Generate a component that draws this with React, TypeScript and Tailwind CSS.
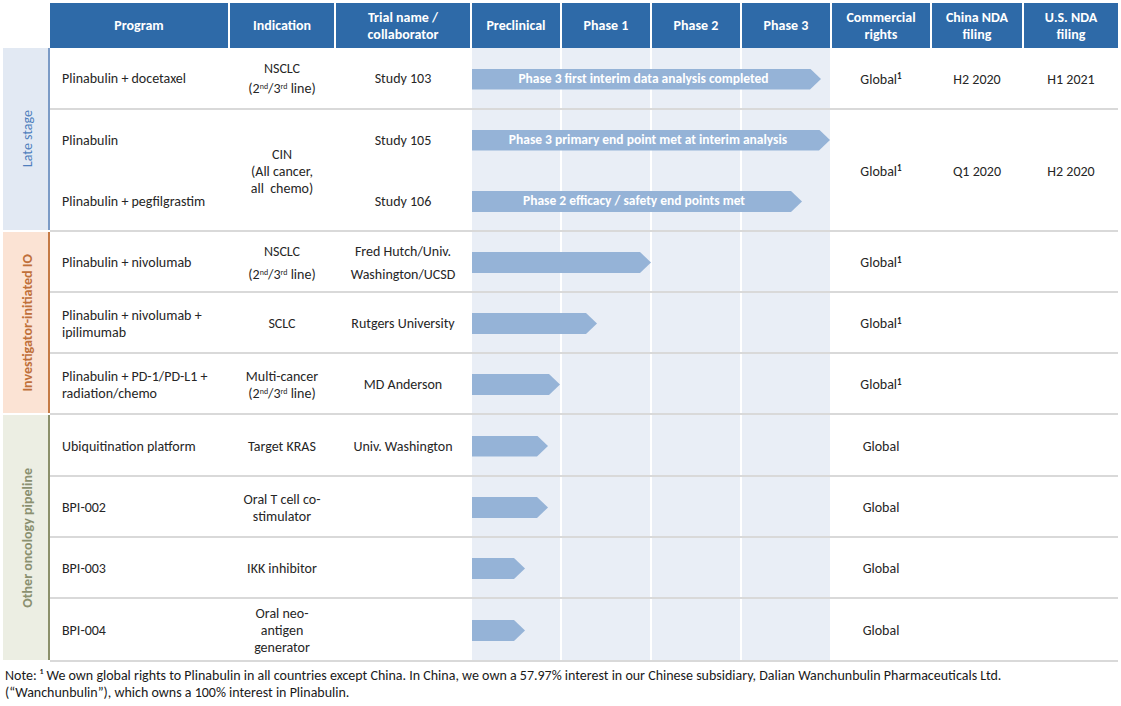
import React from "react";

const GRID =
  "grid grid-cols-[178px_104px_134px_88px_88px_88px_88px_98px_90px_94px] gap-x-[2px]";

function Sup({ children }: { children: React.ReactNode }) {
  return <sup className="text-[9px] font-bold">{children}</sup>;
}

function Line2nd() {
  return (
    <>
      (2<sup className="text-[8px]">nd</sup>/3<sup className="text-[8px]">rd</sup> line)
    </>
  );
}

function Arrow({ end, label, row = 1 }: { end: number; label?: string; row?: number }) {
  const rowCls = row === 1 ? "row-start-1" : "row-start-2";
  return (
    <div className={`col-start-4 col-span-4 ${rowCls} z-10 flex items-center`}>
      <div
        style={{ width: end - 472 }}
        className="h-[21px] bg-[#95b3d7] [clip-path:polygon(0_0,calc(100%_-_11px)_0,100%_50%,calc(100%_-_11px)_100%,0_100%)] flex items-center justify-center pr-[6px] text-white font-bold text-[13.5px] whitespace-nowrap"
      >
        {label}
      </div>
    </div>
  );
}

function PhaseBg({ span2 = false }: { span2?: boolean }) {
  const r = span2 ? "row-start-1 row-span-2" : "row-start-1";
  return (
    <>
      <div className={`col-start-4 ${r} bg-[#e9eef6]`} />
      <div className={`col-start-5 ${r} bg-[#e9eef6]`} />
      <div className={`col-start-6 ${r} bg-[#e9eef6]`} />
      <div className={`col-start-7 ${r} bg-[#e9eef6]`} />
    </>
  );
}

type RowProps = {
  h: string;
  program: React.ReactNode;
  indication?: React.ReactNode;
  trial?: React.ReactNode;
  end: number;
  label?: string;
  commercial?: React.ReactNode;
  china?: string;
  us?: string;
  leading?: string;
};

function Row({ h, program, indication, trial, end, label, commercial, china, us, leading = "leading-[17px]" }: RowProps) {
  return (
    <div className={`${GRID} ${h} border-b-2 border-[#d9d9d9] grid-rows-1`}>
      <div className={`col-start-1 row-start-1 flex items-center pl-[12px] pt-[2px] ${leading}`}>{program}</div>
      <div className={`col-start-2 row-start-1 flex items-center justify-center text-center pt-[2px] ${leading}`}>
        <div>{indication}</div>
      </div>
      <div className={`col-start-3 row-start-1 flex items-center justify-center text-center pt-[2px] ${leading}`}>
        <div>{trial}</div>
      </div>
      <PhaseBg />
      <div className="col-start-4 col-span-4 row-start-1 z-10 flex pt-[2px]">
        <div className="flex-1 flex items-center">
          <div
            style={{ width: end - 472 }}
            className="h-[21px] bg-[#95b3d7] [clip-path:polygon(0_0,calc(100%_-_11px)_0,100%_50%,calc(100%_-_11px)_100%,0_100%)] flex items-center justify-center pr-[6px] text-white font-bold text-[13.5px] whitespace-nowrap"
          >
            {label}
          </div>
        </div>
      </div>
      <div className="col-start-8 row-start-1 flex items-center justify-center pt-[2px]">{commercial}</div>
      <div className="col-start-9 row-start-1 flex items-center justify-center pt-[2px]">{china}</div>
      <div className="col-start-10 row-start-1 flex items-center justify-center pt-[2px]">{us}</div>
    </div>
  );
}

function Sidebar({
  children,
  bg,
  line,
  text,
}: {
  children: React.ReactNode;
  bg: string;
  line: string;
  text: string;
}) {
  return (
    <div className={`w-[47px] shrink-0 mb-[2px] flex ${bg}`}>
      <div className="flex-1 flex items-center justify-center pl-[3px]">
        <span className={`[writing-mode:vertical-rl] rotate-180 whitespace-nowrap text-[14px] ${text}`}>
          {children}
        </span>
      </div>
      <div className={`w-[2px] ${line}`} />
    </div>
  );
}

const headers = [
  "Program",
  "Indication",
  "Trial name /\ncollaborator",
  "Preclinical",
  "Phase 1",
  "Phase 2",
  "Phase 3",
  "Commercial\nrights",
  "China NDA\nfiling",
  "U.S. NDA\nfiling",
];

const G1 = (
  <span>
    Global<Sup>1</Sup>
  </span>
);

export default function App() {
  return (
    <div className="w-[1121px] h-[706px] bg-white pt-[3px] pl-[3px] text-[14px] text-[#262626] [font-family:Carlito,Lato,sans-serif] overflow-hidden">
      {/* header */}
      <div className="flex">
        <div className="w-[47px] shrink-0" />
        <div className={`${GRID} h-[45px]`}>
          {headers.map((t) => (
            <div
              key={t}
              className="bg-[#2e6aa8] text-white font-bold text-[14px] leading-[17px] flex items-center justify-center text-center whitespace-pre-line"
            >
              {t}
            </div>
          ))}
        </div>
      </div>

      {/* Late stage */}
      <div className="flex">
        <Sidebar bg="bg-[#e2e9f3]" line="bg-[#7b9bc6]" text="text-[#4f7fbd]">
          Late stage
        </Sidebar>
        <div className="flex flex-col">
          <Row
            h="h-[62px]"
            program="Plinabulin + docetaxel"
            indication={
              <>
                NSCLC
                <br />
                <Line2nd />
              </>
            }
            trial="Study 103"
            end={821}
            label="Phase 3 first interim data analysis completed"
            commercial={G1}
            china="H2 2020"
            us="H1 2021"
            leading="leading-[20px]"
          />
          <div className={`${GRID} h-[122px] border-b-2 border-[#d9d9d9] grid-rows-[60px_60px]`}>
            <div className="col-start-1 row-start-1 flex items-center pl-[12px] pt-[1px]">Plinabulin</div>
            <div className="col-start-1 row-start-2 flex items-center pl-[12px] pt-[3px]">Plinabulin + pegfilgrastim</div>
            <div className="col-start-2 row-start-1 row-span-2 flex items-center justify-center text-center leading-[17px] pt-[2px]">
              <div>
                CIN
                <br />
                (All cancer,
                <br />
                all&nbsp; chemo)
              </div>
            </div>
            <div className="col-start-3 row-start-1 flex items-center justify-center pt-[1px]">Study 105</div>
            <div className="col-start-3 row-start-2 flex items-center justify-center pt-[3px]">Study 106</div>
            <PhaseBg span2 />
            <Arrow end={830} label="Phase 3 primary end point met at interim analysis" row={1} />
            <div className="col-start-4 col-span-4 row-start-2 z-10 flex items-center pt-[3px]">
              <div
                style={{ width: 802 - 472 }}
                className="h-[21px] bg-[#95b3d7] [clip-path:polygon(0_0,calc(100%_-_11px)_0,100%_50%,calc(100%_-_11px)_100%,0_100%)] flex items-center justify-center pr-[6px] text-white font-bold text-[13.5px] whitespace-nowrap"
              >
                Phase 2 efficacy / safety end points met
              </div>
            </div>
            <div className="col-start-8 row-start-1 row-span-2 flex items-center justify-center pt-[2px]">{G1}</div>
            <div className="col-start-9 row-start-1 row-span-2 flex items-center justify-center pt-[2px]">Q1 2020</div>
            <div className="col-start-10 row-start-1 row-span-2 flex items-center justify-center pt-[2px]">H2 2020</div>
          </div>
        </div>
      </div>

      {/* Investigator-initiated IO */}
      <div className="flex">
        <Sidebar bg="bg-[#fbe3d4]" line="bg-[#c57a45]" text="text-[#c0703a] font-semibold">
          Investigator-initiated IO
        </Sidebar>
        <div className="flex flex-col">
          <Row
            h="h-[61px]"
            program="Plinabulin + nivolumab"
            indication={
              <>
                NSCLC
                <br />
                <Line2nd />
              </>
            }
            trial={
              <>
                Fred Hutch/Univ.
                <br />
                Washington/UCSD
              </>
            }
            end={651}
            commercial={G1}
            leading="leading-[23px]"
          />
          <Row
            h="h-[61px]"
            program={
              <span>
                Plinabulin + nivolumab +
                <br />
                ipilimumab
              </span>
            }
            indication="SCLC"
            trial="Rutgers University"
            end={597}
            commercial={G1}
          />
          <Row
            h="h-[61px]"
            program={
              <span>
                Plinabulin + PD-1/PD-L1 +
                <br />
                radiation/chemo
              </span>
            }
            indication={
              <>
                Multi-cancer
                <br />
                <Line2nd />
              </>
            }
            trial="MD Anderson"
            end={560}
            commercial={G1}
          />
        </div>
      </div>

      {/* Other oncology pipeline */}
      <div className="flex">
        <Sidebar bg="bg-[#eceee3]" line="bg-[#8b906b]" text="text-[#8a9070] font-semibold">
          Other oncology pipeline
        </Sidebar>
        <div className="flex flex-col">
          <Row
            h="h-[62px]"
            program="Ubiquitination platform"
            indication="Target KRAS"
            trial="Univ. Washington"
            end={548}
            commercial="Global"
          />
          <Row
            h="h-[61px]"
            program="BPI-002"
            indication={
              <>
                Oral T cell co-
                <br />
                stimulator
              </>
            }
            end={548}
            commercial="Global"
          />
          <Row h="h-[61px]" program="BPI-003" indication="IKK inhibitor" end={525} commercial="Global" />
          <Row
            h="h-[63px]"
            program="BPI-004"
            indication={
              <>
                Oral neo-
                <br />
                antigen
                <br />
                generator
              </>
            }
            end={525}
            commercial="Global"
          />
        </div>
      </div>

      {/* Note */}
      <div className="pl-[2px] pt-[5px] text-[14px] leading-[17px] text-[#1a1a1a] whitespace-nowrap">
        Note: ¹ We own global rights to Plinabulin in all countries except China. In China, we own a 57.97% interest in our
        Chinese subsidiary, Dalian Wanchunbulin Pharmaceuticals Ltd.
        <br />
        (“Wanchunbulin”), which owns a 100% interest in Plinabulin.
      </div>
    </div>
  );
}
